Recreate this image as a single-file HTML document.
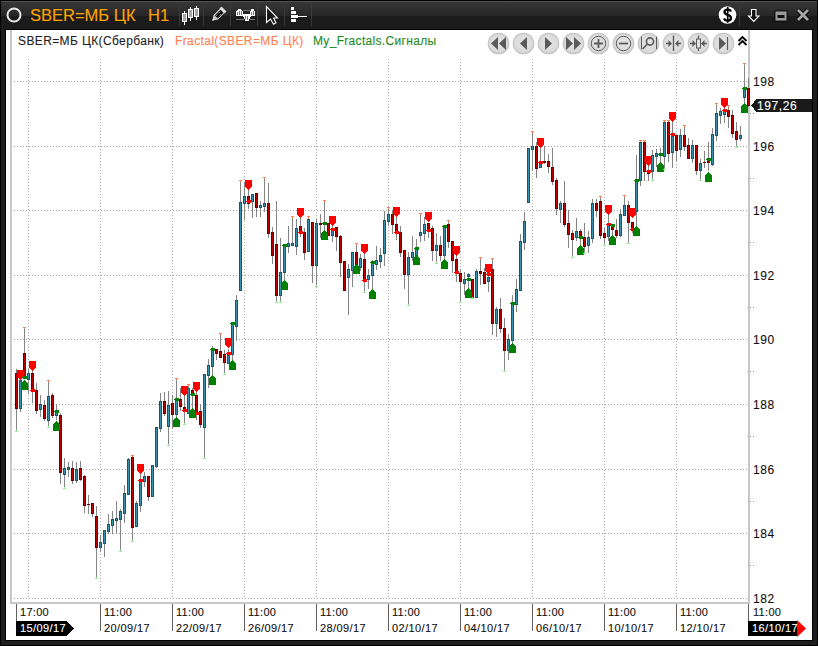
<!DOCTYPE html>
<html><head><meta charset="utf-8">
<style>
html,body{margin:0;padding:0;background:#1e1e1e;}
#root{position:relative;width:818px;height:646px;overflow:hidden;font-family:"Liberation Sans",sans-serif;}
#root svg{position:absolute;left:0;top:0;}
.t{position:absolute;white-space:nowrap;line-height:1;-webkit-text-stroke:0.1px currentColor;}
.tm{letter-spacing:0.35px;}
</style></head><body><div id="root">
<svg width="818" height="646" viewBox="0 0 818 646" shape-rendering="crispEdges"><defs><linearGradient id="hdr" x1="0" y1="0" x2="0" y2="1"><stop offset="0" stop-color="#383838"/><stop offset="1" stop-color="#262626"/></linearGradient><radialGradient id="btn" cx="0.5" cy="0.45" r="0.55"><stop offset="0" stop-color="#e4e4e4"/><stop offset="0.85" stop-color="#dadada"/><stop offset="1" stop-color="#d0d0d0"/></radialGradient></defs><rect x="0" y="0" width="818" height="646" fill="#1e1e1e"/><rect x="0" y="1" width="818" height="15" fill="url(#hdr)"/><rect x="0" y="16" width="818" height="13" fill="#1b1b1b"/><rect x="0" y="1" width="818" height="1" fill="#505050"/><rect x="0" y="0" width="818" height="1" fill="#000"/><rect x="0" y="0" width="1" height="646" fill="#000"/><rect x="817" y="0" width="1" height="646" fill="#000"/><rect x="0" y="645" width="818" height="1" fill="#000"/><rect x="5" y="29" width="808" height="612" fill="#000"/><rect x="6" y="30" width="806" height="610" fill="#fff"/><circle cx="14" cy="15" r="6.5" fill="none" stroke="#e8e8e8" stroke-width="2" shape-rendering="geometricPrecision"/><rect x="179" y="5" width="1" height="21" fill="#3a3a3a"/><rect x="203" y="5" width="1" height="21" fill="#3a3a3a"/><rect x="230" y="5" width="1" height="21" fill="#3a3a3a"/><rect x="257" y="5" width="1" height="21" fill="#3a3a3a"/><rect x="284" y="5" width="1" height="21" fill="#3a3a3a"/><rect x="311" y="5" width="1" height="21" fill="#3a3a3a"/><rect x="739" y="5" width="1" height="21" fill="#3a3a3a"/><rect x="184" y="11" width="1" height="14" fill="#fff"/><rect x="182" y="13" width="5" height="9" fill="#fff"/><rect x="183" y="14" width="3" height="7" fill="#a8a8a8"/><rect x="190" y="7" width="1" height="14" fill="#fff"/><rect x="188" y="9" width="5" height="9" fill="#fff"/><rect x="189" y="10" width="3" height="7" fill="#a8a8a8"/><rect x="196" y="6" width="1" height="14" fill="#fff"/><rect x="194" y="8" width="5" height="9" fill="#fff"/><rect x="195" y="9" width="3" height="7" fill="#a8a8a8"/><g shape-rendering="geometricPrecision"><path d="M212 21 L213 15 L221.5 6.5 L226.5 11.5 L218 20 Z" fill="#c8c8c8" stroke="#000" stroke-width="0.6"/><path d="M214.8 15.6 L220.6 9.8 L223.6 12.8 L217.8 18.6 Z" fill="#000"/><path d="M216 15.8 L220.5 11.3 M217.8 17.5 L222.3 13" stroke="#fff" stroke-width="0.9" stroke-dasharray="1 1"/><path d="M221.5 6.5 L226.5 11.5 L224.5 13.5 L219.5 8.5 Z" fill="#e0e0e0"/><path d="M212.2 20.8 L213 18.5 L214.5 20 Z" fill="#fff"/></g><g shape-rendering="crispEdges"><rect x="236" y="11" width="7" height="5" fill="#fff"/><rect x="237" y="10" width="5" height="1" fill="#fff"/><rect x="238" y="9" width="3" height="1" fill="#fff"/><rect x="237" y="12" width="1" height="3" fill="#777"/><rect x="239" y="11" width="1" height="4" fill="#777"/><rect x="241" y="11" width="1" height="4" fill="#777"/><rect x="243" y="14" width="8" height="3" fill="#fff"/><rect x="244" y="17" width="6" height="2" fill="#fff"/><rect x="245" y="19" width="4" height="2" fill="#fff"/><rect x="245" y="16" width="1" height="3" fill="#777"/><rect x="247" y="16" width="1" height="4" fill="#777"/><rect x="250" y="11" width="5" height="5" fill="#fff"/><rect x="251" y="9" width="3" height="2" fill="#fff"/><rect x="251" y="12" width="1" height="3" fill="#777"/><rect x="253" y="11" width="1" height="4" fill="#777"/><rect x="243" y="10" width="7" height="1" fill="#777"/><rect x="243" y="11" width="7" height="3" fill="#222"/><rect x="236" y="19" width="8" height="1" fill="#777"/><rect x="250" y="19" width="5" height="1" fill="#777"/></g><path d="M266.5 6.5 V22.5 L270.5 19 L273.5 24.3 L276 22.8 L273.5 18 H277.5 Z" fill="#161616" stroke="#fff" stroke-width="1.1" stroke-linejoin="miter" shape-rendering="geometricPrecision"/><rect x="291" y="7" width="3" height="3" fill="#fff"/><rect x="291" y="11" width="5" height="3" fill="#fff"/><rect x="291" y="15" width="7" height="3" fill="#fff"/><rect x="298" y="16" width="9" height="1" fill="#fff"/><rect x="291" y="19" width="5" height="3" fill="#fff"/><g shape-rendering="geometricPrecision"><circle cx="727.5" cy="15" r="8.8" fill="#fff"/><path d="M730.8 11.6 C730.6 10.3 729.4 9.6 727.7 9.6 C725.8 9.6 724.5 10.5 724.5 12 C724.5 13.7 726.2 14.3 727.7 14.8 C729.4 15.3 731 16 731 17.9 C731 19.6 729.5 20.5 727.7 20.5 C725.8 20.5 724.4 19.7 724.2 18.3" fill="none" stroke="#000" stroke-width="2.3"/><path d="M727.7 7 V22.8" stroke="#000" stroke-width="1.7"/><path d="M751.5 9.5 H756 V16 H759 L753.75 21.5 L748.5 16 H751.5 Z" fill="#111" stroke="#fff" stroke-width="1.1"/><rect x="775" y="11" width="12" height="10" fill="#9a9a9a" stroke="#000" stroke-width="0.8"/><rect x="777.5" y="15" width="7" height="3" fill="#111"/><path d="M798 10 L808 20 M808 10 L798 20" stroke="#000" stroke-width="4.6"/><path d="M798 10 L808 20 M808 10 L798 20" stroke="#a8a8a8" stroke-width="2.8"/></g><line x1="11" y1="81.5" x2="748" y2="81.5" stroke="#a0a0a0" stroke-width="1" stroke-dasharray="1 2"/><line x1="11" y1="146.5" x2="748" y2="146.5" stroke="#a0a0a0" stroke-width="1" stroke-dasharray="1 2"/><line x1="11" y1="210.5" x2="748" y2="210.5" stroke="#a0a0a0" stroke-width="1" stroke-dasharray="1 2"/><line x1="11" y1="275.5" x2="748" y2="275.5" stroke="#a0a0a0" stroke-width="1" stroke-dasharray="1 2"/><line x1="11" y1="339.5" x2="748" y2="339.5" stroke="#a0a0a0" stroke-width="1" stroke-dasharray="1 2"/><line x1="11" y1="404.5" x2="748" y2="404.5" stroke="#a0a0a0" stroke-width="1" stroke-dasharray="1 2"/><line x1="11" y1="469.5" x2="748" y2="469.5" stroke="#a0a0a0" stroke-width="1" stroke-dasharray="1 2"/><line x1="11" y1="533.5" x2="748" y2="533.5" stroke="#a0a0a0" stroke-width="1" stroke-dasharray="1 2"/><line x1="11" y1="598.5" x2="748" y2="598.5" stroke="#a0a0a0" stroke-width="1" stroke-dasharray="1 2"/><line x1="28.5" y1="59" x2="28.5" y2="599" stroke="#b0b0b0" stroke-width="1" stroke-dasharray="1 2"/><line x1="100.5" y1="59" x2="100.5" y2="599" stroke="#b0b0b0" stroke-width="1" stroke-dasharray="1 2"/><line x1="172.5" y1="59" x2="172.5" y2="599" stroke="#b0b0b0" stroke-width="1" stroke-dasharray="1 2"/><line x1="244.5" y1="59" x2="244.5" y2="599" stroke="#b0b0b0" stroke-width="1" stroke-dasharray="1 2"/><line x1="316.5" y1="59" x2="316.5" y2="599" stroke="#b0b0b0" stroke-width="1" stroke-dasharray="1 2"/><line x1="388.5" y1="59" x2="388.5" y2="599" stroke="#b0b0b0" stroke-width="1" stroke-dasharray="1 2"/><line x1="460.5" y1="59" x2="460.5" y2="599" stroke="#b0b0b0" stroke-width="1" stroke-dasharray="1 2"/><line x1="532.5" y1="59" x2="532.5" y2="599" stroke="#b0b0b0" stroke-width="1" stroke-dasharray="1 2"/><line x1="604.5" y1="59" x2="604.5" y2="599" stroke="#b0b0b0" stroke-width="1" stroke-dasharray="1 2"/><line x1="676.5" y1="59" x2="676.5" y2="599" stroke="#b0b0b0" stroke-width="1" stroke-dasharray="1 2"/><rect x="10" y="30" width="2" height="574" fill="#c8c8c8"/><rect x="748" y="30" width="2" height="574" fill="#c8c8c8"/><rect x="10" y="602" width="740" height="2" fill="#c8c8c8"/><rect x="750" y="113" width="1" height="1" fill="#909090"/><rect x="753" y="113" width="1" height="1" fill="#909090"/><rect x="750" y="178" width="1" height="1" fill="#909090"/><rect x="753" y="178" width="1" height="1" fill="#909090"/><rect x="750" y="242" width="1" height="1" fill="#909090"/><rect x="753" y="242" width="1" height="1" fill="#909090"/><rect x="750" y="307" width="1" height="1" fill="#909090"/><rect x="753" y="307" width="1" height="1" fill="#909090"/><rect x="750" y="371" width="1" height="1" fill="#909090"/><rect x="753" y="371" width="1" height="1" fill="#909090"/><rect x="750" y="436" width="1" height="1" fill="#909090"/><rect x="753" y="436" width="1" height="1" fill="#909090"/><rect x="750" y="501" width="1" height="1" fill="#909090"/><rect x="753" y="501" width="1" height="1" fill="#909090"/><rect x="750" y="565" width="1" height="1" fill="#909090"/><rect x="753" y="565" width="1" height="1" fill="#909090"/><rect x="16" y="604" width="1" height="17" fill="#606060"/><rect x="100" y="604" width="1" height="27" fill="#606060"/><rect x="172" y="604" width="1" height="27" fill="#606060"/><rect x="244" y="604" width="1" height="27" fill="#606060"/><rect x="316" y="604" width="1" height="27" fill="#606060"/><rect x="388" y="604" width="1" height="27" fill="#606060"/><rect x="460" y="604" width="1" height="27" fill="#606060"/><rect x="532" y="604" width="1" height="27" fill="#606060"/><rect x="604" y="604" width="1" height="27" fill="#606060"/><rect x="676" y="604" width="1" height="27" fill="#606060"/><rect x="748" y="604" width="1" height="17" fill="#606060"/><g shape-rendering="geometricPrecision"><circle cx="498.5" cy="43.5" r="10.2" fill="url(#btn)" stroke="#c6c6c6" stroke-width="1.3"/><circle cx="523.5" cy="43.5" r="10.2" fill="url(#btn)" stroke="#c6c6c6" stroke-width="1.3"/><circle cx="548.5" cy="43.5" r="10.2" fill="url(#btn)" stroke="#c6c6c6" stroke-width="1.3"/><circle cx="573.5" cy="43.5" r="10.2" fill="url(#btn)" stroke="#c6c6c6" stroke-width="1.3"/><circle cx="598.5" cy="43.5" r="10.2" fill="url(#btn)" stroke="#c6c6c6" stroke-width="1.3"/><circle cx="623.5" cy="43.5" r="10.2" fill="url(#btn)" stroke="#c6c6c6" stroke-width="1.3"/><circle cx="648.5" cy="43.5" r="10.2" fill="url(#btn)" stroke="#c6c6c6" stroke-width="1.3"/><circle cx="673.5" cy="43.5" r="10.2" fill="url(#btn)" stroke="#c6c6c6" stroke-width="1.3"/><circle cx="698.5" cy="43.5" r="10.2" fill="url(#btn)" stroke="#c6c6c6" stroke-width="1.3"/><circle cx="723.5" cy="43.5" r="10.2" fill="url(#btn)" stroke="#c6c6c6" stroke-width="1.3"/><path d="M491 43.5 L498 37 V50 Z M499 43.5 L506 37 V50 Z" fill="#5a5a5a"/><path d="M520 43.5 L527 37 V50 Z" fill="#5a5a5a"/><path d="M552 43.5 L545 37 V50 Z" fill="#5a5a5a"/><path d="M566 37 L573 43.5 L566 50 Z M574 37 L581 43.5 L574 50 Z" fill="#5a5a5a"/><circle cx="598.5" cy="43.5" r="7.2" fill="none" stroke="#5a5a5a" stroke-width="1"/><path d="M594 43.5 H603 M598.5 39 V48" stroke="#5a5a5a" stroke-width="1.8"/><circle cx="623.5" cy="43.5" r="7.2" fill="none" stroke="#5a5a5a" stroke-width="1"/><path d="M619 43.5 H628" stroke="#5a5a5a" stroke-width="1.8"/><path d="M641.5 36.5 V49 M656.5 36.5 V49" stroke="#5a5a5a" stroke-width="1"/><circle cx="650" cy="41.5" r="3.6" fill="none" stroke="#5a5a5a" stroke-width="1.6"/><path d="M647.5 44 L642.5 49" stroke="#5a5a5a" stroke-width="1.6"/><path d="M673.5 35.5 V51" stroke="#5a5a5a" stroke-width="1.4"/><path d="M666 43.5 H670 M677 43.5 H681" stroke="#5a5a5a" stroke-width="1.4"/><path d="M672 43.5 L668.5 40 V47 Z M675 43.5 L678.5 40 V47 Z" fill="#5a5a5a"/><path d="M698.5 35.5 V51" stroke="#5a5a5a" stroke-width="1.2"/><rect x="696.5" y="39" width="4" height="9" fill="#e0e0e0" stroke="#5a5a5a" stroke-width="1"/><path d="M690 43.5 H694 M703 43.5 H707" stroke="#5a5a5a" stroke-width="1.4"/><path d="M696 43.5 L692.5 40 V47 Z M701 43.5 L704.5 40 V47 Z" fill="#5a5a5a"/><path d="M719 37 L726 43.5 L719 50 Z" fill="#5a5a5a"/><path d="M727.5 37 V50" stroke="#5a5a5a" stroke-width="1.2"/><path d="M738.5 41 L742.5 37 L746.5 41 M738.5 45 L742.5 41 L746.5 45" fill="none" stroke="#000" stroke-width="1.8"/></g><rect x="16" y="369" width="1" height="63" fill="#858585"/><rect x="15" y="373" width="3" height="36" fill="#6a0000"/><rect x="16" y="374" width="1" height="34" fill="#b80000"/><rect x="20" y="377" width="1" height="35" fill="#858585"/><rect x="19" y="380" width="3" height="29" fill="#1e5568"/><rect x="20" y="381" width="1" height="27" fill="#3a90aa"/><rect x="24" y="327" width="1" height="52" fill="#858585"/><rect x="23" y="353" width="3" height="24" fill="#6a0000"/><rect x="24" y="354" width="1" height="22" fill="#b80000"/><rect x="28" y="369" width="1" height="25" fill="#858585"/><rect x="27" y="373" width="3" height="7" fill="#1e5568"/><rect x="28" y="374" width="1" height="5" fill="#3a90aa"/><rect x="32" y="370" width="1" height="33" fill="#858585"/><rect x="31" y="373" width="3" height="18" fill="#6a0000"/><rect x="32" y="374" width="1" height="16" fill="#b80000"/><rect x="36" y="383" width="1" height="31" fill="#858585"/><rect x="35" y="390" width="3" height="21" fill="#6a0000"/><rect x="36" y="391" width="1" height="19" fill="#b80000"/><rect x="40" y="395" width="1" height="22" fill="#858585"/><rect x="39" y="404" width="3" height="6" fill="#1e5568"/><rect x="40" y="405" width="1" height="4" fill="#3a90aa"/><rect x="44" y="400" width="1" height="21" fill="#858585"/><rect x="43" y="405" width="3" height="14" fill="#6a0000"/><rect x="44" y="406" width="1" height="12" fill="#b80000"/><rect x="48" y="380" width="1" height="48" fill="#858585"/><rect x="47" y="396" width="3" height="25" fill="#1e5568"/><rect x="48" y="397" width="1" height="23" fill="#3a90aa"/><rect x="52" y="393" width="1" height="25" fill="#858585"/><rect x="51" y="395" width="3" height="21" fill="#6a0000"/><rect x="52" y="396" width="1" height="19" fill="#b80000"/><rect x="56" y="404" width="1" height="16" fill="#858585"/><rect x="55" y="411" width="3" height="5" fill="#1e5568"/><rect x="56" y="412" width="1" height="3" fill="#3a90aa"/><rect x="60" y="413" width="1" height="71" fill="#858585"/><rect x="59" y="415" width="3" height="58" fill="#6a0000"/><rect x="60" y="416" width="1" height="56" fill="#b80000"/><rect x="64" y="458" width="1" height="31" fill="#858585"/><rect x="63" y="468" width="3" height="7" fill="#1e5568"/><rect x="64" y="469" width="1" height="5" fill="#3a90aa"/><rect x="68" y="462" width="1" height="15" fill="#858585"/><rect x="67" y="467" width="3" height="3" fill="#1e5568"/><rect x="68" y="468" width="1" height="1" fill="#3a90aa"/><rect x="72" y="461" width="1" height="23" fill="#858585"/><rect x="71" y="468" width="3" height="13" fill="#6a0000"/><rect x="72" y="469" width="1" height="11" fill="#b80000"/><rect x="76" y="462" width="1" height="21" fill="#858585"/><rect x="75" y="469" width="3" height="12" fill="#1e5568"/><rect x="76" y="470" width="1" height="10" fill="#3a90aa"/><rect x="80" y="461" width="1" height="20" fill="#858585"/><rect x="79" y="468" width="3" height="12" fill="#6a0000"/><rect x="80" y="469" width="1" height="10" fill="#b80000"/><rect x="84" y="475" width="1" height="38" fill="#858585"/><rect x="83" y="476" width="3" height="30" fill="#6a0000"/><rect x="84" y="477" width="1" height="28" fill="#b80000"/><rect x="88" y="495" width="1" height="19" fill="#858585"/><rect x="87" y="504" width="3" height="1" fill="#6a0000"/><rect x="92" y="503" width="1" height="14" fill="#858585"/><rect x="91" y="503" width="3" height="11" fill="#6a0000"/><rect x="92" y="504" width="1" height="9" fill="#b80000"/><rect x="96" y="506" width="1" height="73" fill="#858585"/><rect x="95" y="516" width="3" height="32" fill="#6a0000"/><rect x="96" y="517" width="1" height="30" fill="#b80000"/><rect x="100" y="535" width="1" height="17" fill="#858585"/><rect x="99" y="542" width="3" height="6" fill="#1e5568"/><rect x="100" y="543" width="1" height="4" fill="#3a90aa"/><rect x="104" y="530" width="1" height="27" fill="#858585"/><rect x="103" y="530" width="3" height="14" fill="#1e5568"/><rect x="104" y="531" width="1" height="12" fill="#3a90aa"/><rect x="108" y="514" width="1" height="20" fill="#858585"/><rect x="107" y="524" width="3" height="8" fill="#1e5568"/><rect x="108" y="525" width="1" height="6" fill="#3a90aa"/><rect x="112" y="511" width="1" height="23" fill="#858585"/><rect x="111" y="519" width="3" height="7" fill="#1e5568"/><rect x="112" y="520" width="1" height="5" fill="#3a90aa"/><rect x="116" y="501" width="1" height="33" fill="#858585"/><rect x="115" y="518" width="3" height="3" fill="#1e5568"/><rect x="116" y="519" width="1" height="1" fill="#3a90aa"/><rect x="120" y="509" width="1" height="43" fill="#858585"/><rect x="119" y="511" width="3" height="9" fill="#1e5568"/><rect x="120" y="512" width="1" height="7" fill="#3a90aa"/><rect x="124" y="485" width="1" height="38" fill="#858585"/><rect x="123" y="493" width="3" height="21" fill="#1e5568"/><rect x="124" y="494" width="1" height="19" fill="#3a90aa"/><rect x="128" y="458" width="1" height="37" fill="#858585"/><rect x="127" y="459" width="3" height="36" fill="#1e5568"/><rect x="128" y="460" width="1" height="34" fill="#3a90aa"/><rect x="132" y="455" width="1" height="87" fill="#858585"/><rect x="131" y="457" width="3" height="71" fill="#6a0000"/><rect x="132" y="458" width="1" height="69" fill="#b80000"/><rect x="136" y="501" width="1" height="26" fill="#858585"/><rect x="135" y="503" width="3" height="24" fill="#1e5568"/><rect x="136" y="504" width="1" height="22" fill="#3a90aa"/><rect x="140" y="473" width="1" height="39" fill="#858585"/><rect x="139" y="480" width="3" height="26" fill="#1e5568"/><rect x="140" y="481" width="1" height="24" fill="#3a90aa"/><rect x="144" y="472" width="1" height="15" fill="#858585"/><rect x="143" y="476" width="3" height="6" fill="#1e5568"/><rect x="144" y="477" width="1" height="4" fill="#3a90aa"/><rect x="148" y="476" width="1" height="25" fill="#858585"/><rect x="147" y="476" width="3" height="21" fill="#6a0000"/><rect x="148" y="477" width="1" height="19" fill="#b80000"/><rect x="152" y="465" width="1" height="32" fill="#858585"/><rect x="151" y="465" width="3" height="32" fill="#1e5568"/><rect x="152" y="466" width="1" height="30" fill="#3a90aa"/><rect x="156" y="427" width="1" height="41" fill="#858585"/><rect x="155" y="427" width="3" height="40" fill="#1e5568"/><rect x="156" y="428" width="1" height="38" fill="#3a90aa"/><rect x="160" y="393" width="1" height="39" fill="#858585"/><rect x="159" y="401" width="3" height="28" fill="#1e5568"/><rect x="160" y="402" width="1" height="26" fill="#3a90aa"/><rect x="164" y="392" width="1" height="24" fill="#858585"/><rect x="163" y="401" width="3" height="13" fill="#6a0000"/><rect x="164" y="402" width="1" height="11" fill="#b80000"/><rect x="168" y="391" width="1" height="55" fill="#858585"/><rect x="167" y="405" width="3" height="22" fill="#1e5568"/><rect x="168" y="406" width="1" height="20" fill="#3a90aa"/><rect x="172" y="395" width="1" height="34" fill="#858585"/><rect x="171" y="403" width="3" height="12" fill="#6a0000"/><rect x="172" y="404" width="1" height="10" fill="#b80000"/><rect x="176" y="378" width="1" height="39" fill="#858585"/><rect x="175" y="399" width="3" height="16" fill="#1e5568"/><rect x="176" y="400" width="1" height="14" fill="#3a90aa"/><rect x="180" y="388" width="1" height="23" fill="#858585"/><rect x="179" y="399" width="3" height="8" fill="#6a0000"/><rect x="180" y="400" width="1" height="6" fill="#b80000"/><rect x="184" y="391" width="1" height="34" fill="#858585"/><rect x="183" y="407" width="3" height="4" fill="#6a0000"/><rect x="184" y="408" width="1" height="2" fill="#b80000"/><rect x="188" y="384" width="1" height="30" fill="#858585"/><rect x="187" y="388" width="3" height="26" fill="#1e5568"/><rect x="188" y="389" width="1" height="24" fill="#3a90aa"/><rect x="192" y="388" width="1" height="23" fill="#858585"/><rect x="191" y="390" width="3" height="4" fill="#6a0000"/><rect x="192" y="391" width="1" height="2" fill="#b80000"/><rect x="196" y="392" width="1" height="28" fill="#858585"/><rect x="195" y="395" width="3" height="20" fill="#6a0000"/><rect x="196" y="396" width="1" height="18" fill="#b80000"/><rect x="200" y="404" width="1" height="24" fill="#858585"/><rect x="199" y="411" width="3" height="14" fill="#6a0000"/><rect x="200" y="412" width="1" height="12" fill="#b80000"/><rect x="204" y="374" width="1" height="85" fill="#858585"/><rect x="203" y="374" width="3" height="54" fill="#1e5568"/><rect x="204" y="375" width="1" height="52" fill="#3a90aa"/><rect x="208" y="359" width="1" height="29" fill="#858585"/><rect x="207" y="365" width="3" height="11" fill="#1e5568"/><rect x="208" y="366" width="1" height="9" fill="#3a90aa"/><rect x="212" y="346" width="1" height="30" fill="#858585"/><rect x="211" y="348" width="3" height="19" fill="#1e5568"/><rect x="212" y="349" width="1" height="17" fill="#3a90aa"/><rect x="216" y="349" width="1" height="11" fill="#858585"/><rect x="215" y="349" width="3" height="5" fill="#6a0000"/><rect x="216" y="350" width="1" height="3" fill="#b80000"/><rect x="220" y="333" width="1" height="25" fill="#858585"/><rect x="219" y="351" width="3" height="7" fill="#6a0000"/><rect x="220" y="352" width="1" height="5" fill="#b80000"/><rect x="224" y="350" width="1" height="25" fill="#858585"/><rect x="223" y="354" width="3" height="9" fill="#6a0000"/><rect x="224" y="355" width="1" height="7" fill="#b80000"/><rect x="228" y="349" width="1" height="15" fill="#858585"/><rect x="227" y="355" width="3" height="9" fill="#1e5568"/><rect x="228" y="356" width="1" height="7" fill="#3a90aa"/><rect x="232" y="322" width="1" height="40" fill="#858585"/><rect x="231" y="322" width="3" height="33" fill="#1e5568"/><rect x="232" y="323" width="1" height="31" fill="#3a90aa"/><rect x="236" y="295" width="1" height="46" fill="#858585"/><rect x="235" y="300" width="3" height="27" fill="#1e5568"/><rect x="236" y="301" width="1" height="25" fill="#3a90aa"/><rect x="240" y="180" width="1" height="111" fill="#858585"/><rect x="239" y="202" width="3" height="89" fill="#1e5568"/><rect x="240" y="203" width="1" height="87" fill="#3a90aa"/><rect x="244" y="182" width="1" height="38" fill="#858585"/><rect x="243" y="196" width="3" height="8" fill="#1e5568"/><rect x="244" y="197" width="1" height="6" fill="#3a90aa"/><rect x="248" y="189" width="1" height="20" fill="#858585"/><rect x="247" y="196" width="3" height="8" fill="#6a0000"/><rect x="248" y="197" width="1" height="6" fill="#b80000"/><rect x="252" y="194" width="1" height="24" fill="#858585"/><rect x="251" y="194" width="3" height="8" fill="#1e5568"/><rect x="252" y="195" width="1" height="6" fill="#3a90aa"/><rect x="256" y="193" width="1" height="24" fill="#858585"/><rect x="255" y="193" width="3" height="15" fill="#6a0000"/><rect x="256" y="194" width="1" height="13" fill="#b80000"/><rect x="260" y="201" width="1" height="16" fill="#858585"/><rect x="259" y="205" width="3" height="3" fill="#1e5568"/><rect x="260" y="206" width="1" height="1" fill="#3a90aa"/><rect x="264" y="177" width="1" height="35" fill="#858585"/><rect x="263" y="203" width="3" height="4" fill="#1e5568"/><rect x="264" y="204" width="1" height="2" fill="#3a90aa"/><rect x="268" y="183" width="1" height="55" fill="#858585"/><rect x="267" y="203" width="3" height="31" fill="#6a0000"/><rect x="268" y="204" width="1" height="29" fill="#b80000"/><rect x="272" y="227" width="1" height="37" fill="#858585"/><rect x="271" y="232" width="3" height="24" fill="#6a0000"/><rect x="272" y="233" width="1" height="22" fill="#b80000"/><rect x="276" y="201" width="1" height="102" fill="#858585"/><rect x="275" y="244" width="3" height="52" fill="#6a0000"/><rect x="276" y="245" width="1" height="50" fill="#b80000"/><rect x="280" y="238" width="1" height="65" fill="#858585"/><rect x="279" y="272" width="3" height="24" fill="#1e5568"/><rect x="280" y="273" width="1" height="22" fill="#3a90aa"/><rect x="284" y="245" width="1" height="36" fill="#858585"/><rect x="283" y="245" width="3" height="28" fill="#1e5568"/><rect x="284" y="246" width="1" height="26" fill="#3a90aa"/><rect x="288" y="226" width="1" height="27" fill="#858585"/><rect x="287" y="243" width="3" height="4" fill="#1e5568"/><rect x="288" y="244" width="1" height="2" fill="#3a90aa"/><rect x="292" y="216" width="1" height="30" fill="#858585"/><rect x="291" y="243" width="3" height="3" fill="#1e5568"/><rect x="292" y="244" width="1" height="1" fill="#3a90aa"/><rect x="296" y="219" width="1" height="36" fill="#858585"/><rect x="295" y="228" width="3" height="19" fill="#1e5568"/><rect x="296" y="229" width="1" height="17" fill="#3a90aa"/><rect x="300" y="217" width="1" height="20" fill="#858585"/><rect x="299" y="226" width="3" height="7" fill="#6a0000"/><rect x="300" y="227" width="1" height="5" fill="#b80000"/><rect x="304" y="228" width="1" height="32" fill="#858585"/><rect x="303" y="232" width="3" height="21" fill="#6a0000"/><rect x="304" y="233" width="1" height="19" fill="#b80000"/><rect x="308" y="216" width="1" height="36" fill="#858585"/><rect x="307" y="219" width="3" height="33" fill="#1e5568"/><rect x="308" y="220" width="1" height="31" fill="#3a90aa"/><rect x="312" y="222" width="1" height="61" fill="#858585"/><rect x="311" y="222" width="3" height="44" fill="#6a0000"/><rect x="312" y="223" width="1" height="42" fill="#b80000"/><rect x="316" y="219" width="1" height="68" fill="#858585"/><rect x="315" y="223" width="3" height="43" fill="#1e5568"/><rect x="316" y="224" width="1" height="41" fill="#3a90aa"/><rect x="320" y="214" width="1" height="24" fill="#858585"/><rect x="319" y="223" width="3" height="2" fill="#6a0000"/><rect x="324" y="200" width="1" height="31" fill="#858585"/><rect x="323" y="222" width="3" height="3" fill="#1e5568"/><rect x="324" y="223" width="1" height="1" fill="#3a90aa"/><rect x="328" y="223" width="1" height="13" fill="#858585"/><rect x="327" y="223" width="3" height="13" fill="#6a0000"/><rect x="328" y="224" width="1" height="11" fill="#b80000"/><rect x="332" y="225" width="1" height="17" fill="#858585"/><rect x="331" y="230" width="3" height="6" fill="#1e5568"/><rect x="332" y="231" width="1" height="4" fill="#3a90aa"/><rect x="336" y="227" width="1" height="24" fill="#858585"/><rect x="335" y="227" width="3" height="10" fill="#6a0000"/><rect x="336" y="228" width="1" height="8" fill="#b80000"/><rect x="340" y="235" width="1" height="42" fill="#858585"/><rect x="339" y="236" width="3" height="27" fill="#6a0000"/><rect x="340" y="237" width="1" height="25" fill="#b80000"/><rect x="344" y="261" width="1" height="30" fill="#858585"/><rect x="343" y="261" width="3" height="30" fill="#6a0000"/><rect x="344" y="262" width="1" height="28" fill="#b80000"/><rect x="348" y="264" width="1" height="51" fill="#858585"/><rect x="347" y="269" width="3" height="9" fill="#1e5568"/><rect x="348" y="270" width="1" height="7" fill="#3a90aa"/><rect x="352" y="252" width="1" height="35" fill="#858585"/><rect x="351" y="252" width="3" height="19" fill="#1e5568"/><rect x="352" y="253" width="1" height="17" fill="#3a90aa"/><rect x="356" y="243" width="1" height="25" fill="#858585"/><rect x="355" y="252" width="3" height="16" fill="#6a0000"/><rect x="356" y="253" width="1" height="14" fill="#b80000"/><rect x="360" y="254" width="1" height="17" fill="#858585"/><rect x="359" y="258" width="3" height="10" fill="#1e5568"/><rect x="360" y="259" width="1" height="8" fill="#3a90aa"/><rect x="364" y="254" width="1" height="39" fill="#858585"/><rect x="363" y="259" width="3" height="23" fill="#6a0000"/><rect x="364" y="260" width="1" height="21" fill="#b80000"/><rect x="368" y="269" width="1" height="20" fill="#858585"/><rect x="367" y="275" width="3" height="5" fill="#1e5568"/><rect x="368" y="276" width="1" height="3" fill="#3a90aa"/><rect x="372" y="260" width="1" height="30" fill="#858585"/><rect x="371" y="262" width="3" height="14" fill="#1e5568"/><rect x="372" y="263" width="1" height="12" fill="#3a90aa"/><rect x="376" y="246" width="1" height="24" fill="#858585"/><rect x="375" y="260" width="3" height="5" fill="#1e5568"/><rect x="376" y="261" width="1" height="3" fill="#3a90aa"/><rect x="380" y="248" width="1" height="20" fill="#858585"/><rect x="379" y="255" width="3" height="7" fill="#1e5568"/><rect x="380" y="256" width="1" height="5" fill="#3a90aa"/><rect x="384" y="211" width="1" height="55" fill="#858585"/><rect x="383" y="220" width="3" height="34" fill="#1e5568"/><rect x="384" y="221" width="1" height="32" fill="#3a90aa"/><rect x="388" y="207" width="1" height="19" fill="#858585"/><rect x="387" y="214" width="3" height="8" fill="#1e5568"/><rect x="388" y="215" width="1" height="6" fill="#3a90aa"/><rect x="392" y="210" width="1" height="24" fill="#858585"/><rect x="391" y="214" width="3" height="11" fill="#6a0000"/><rect x="392" y="215" width="1" height="9" fill="#b80000"/><rect x="396" y="216" width="1" height="24" fill="#858585"/><rect x="395" y="224" width="3" height="9" fill="#6a0000"/><rect x="396" y="225" width="1" height="7" fill="#b80000"/><rect x="400" y="226" width="1" height="31" fill="#858585"/><rect x="399" y="232" width="3" height="21" fill="#6a0000"/><rect x="400" y="233" width="1" height="19" fill="#b80000"/><rect x="404" y="250" width="1" height="39" fill="#858585"/><rect x="403" y="250" width="3" height="25" fill="#6a0000"/><rect x="404" y="251" width="1" height="23" fill="#b80000"/><rect x="408" y="252" width="1" height="54" fill="#858585"/><rect x="407" y="257" width="3" height="18" fill="#1e5568"/><rect x="408" y="258" width="1" height="16" fill="#3a90aa"/><rect x="412" y="236" width="1" height="25" fill="#858585"/><rect x="411" y="252" width="3" height="6" fill="#1e5568"/><rect x="412" y="253" width="1" height="4" fill="#3a90aa"/><rect x="416" y="239" width="1" height="17" fill="#858585"/><rect x="415" y="248" width="3" height="8" fill="#1e5568"/><rect x="416" y="249" width="1" height="6" fill="#3a90aa"/><rect x="420" y="214" width="1" height="28" fill="#858585"/><rect x="419" y="232" width="3" height="4" fill="#1e5568"/><rect x="420" y="233" width="1" height="2" fill="#3a90aa"/><rect x="424" y="217" width="1" height="24" fill="#858585"/><rect x="423" y="224" width="3" height="10" fill="#1e5568"/><rect x="424" y="225" width="1" height="8" fill="#3a90aa"/><rect x="428" y="223" width="1" height="15" fill="#858585"/><rect x="427" y="223" width="3" height="9" fill="#6a0000"/><rect x="428" y="224" width="1" height="7" fill="#b80000"/><rect x="432" y="226" width="1" height="35" fill="#858585"/><rect x="431" y="228" width="3" height="23" fill="#6a0000"/><rect x="432" y="229" width="1" height="21" fill="#b80000"/><rect x="436" y="233" width="1" height="31" fill="#858585"/><rect x="435" y="245" width="3" height="6" fill="#1e5568"/><rect x="436" y="246" width="1" height="4" fill="#3a90aa"/><rect x="440" y="236" width="1" height="25" fill="#858585"/><rect x="439" y="245" width="3" height="11" fill="#6a0000"/><rect x="440" y="246" width="1" height="9" fill="#b80000"/><rect x="444" y="226" width="1" height="34" fill="#858585"/><rect x="443" y="226" width="3" height="30" fill="#1e5568"/><rect x="444" y="227" width="1" height="28" fill="#3a90aa"/><rect x="448" y="220" width="1" height="28" fill="#858585"/><rect x="447" y="224" width="3" height="18" fill="#6a0000"/><rect x="448" y="225" width="1" height="16" fill="#b80000"/><rect x="452" y="241" width="1" height="32" fill="#858585"/><rect x="451" y="241" width="3" height="20" fill="#6a0000"/><rect x="452" y="242" width="1" height="18" fill="#b80000"/><rect x="456" y="255" width="1" height="27" fill="#858585"/><rect x="455" y="259" width="3" height="15" fill="#6a0000"/><rect x="456" y="260" width="1" height="13" fill="#b80000"/><rect x="460" y="269" width="1" height="34" fill="#858585"/><rect x="459" y="273" width="3" height="9" fill="#6a0000"/><rect x="460" y="274" width="1" height="7" fill="#b80000"/><rect x="464" y="272" width="1" height="23" fill="#858585"/><rect x="463" y="279" width="3" height="5" fill="#1e5568"/><rect x="464" y="280" width="1" height="3" fill="#3a90aa"/><rect x="468" y="273" width="1" height="16" fill="#858585"/><rect x="467" y="274" width="3" height="3" fill="#1e5568"/><rect x="468" y="275" width="1" height="1" fill="#3a90aa"/><rect x="472" y="279" width="1" height="20" fill="#858585"/><rect x="471" y="279" width="3" height="19" fill="#6a0000"/><rect x="472" y="280" width="1" height="17" fill="#b80000"/><rect x="476" y="269" width="1" height="29" fill="#858585"/><rect x="475" y="271" width="3" height="27" fill="#1e5568"/><rect x="476" y="272" width="1" height="25" fill="#3a90aa"/><rect x="480" y="258" width="1" height="27" fill="#858585"/><rect x="479" y="271" width="3" height="3" fill="#6a0000"/><rect x="480" y="272" width="1" height="1" fill="#b80000"/><rect x="484" y="268" width="1" height="16" fill="#858585"/><rect x="483" y="272" width="3" height="12" fill="#6a0000"/><rect x="484" y="273" width="1" height="10" fill="#b80000"/><rect x="488" y="269" width="1" height="23" fill="#858585"/><rect x="487" y="277" width="3" height="5" fill="#1e5568"/><rect x="488" y="278" width="1" height="3" fill="#3a90aa"/><rect x="492" y="258" width="1" height="77" fill="#858585"/><rect x="491" y="269" width="3" height="55" fill="#6a0000"/><rect x="492" y="270" width="1" height="53" fill="#b80000"/><rect x="496" y="307" width="1" height="30" fill="#858585"/><rect x="495" y="309" width="3" height="15" fill="#1e5568"/><rect x="496" y="310" width="1" height="13" fill="#3a90aa"/><rect x="500" y="298" width="1" height="35" fill="#858585"/><rect x="499" y="309" width="3" height="20" fill="#6a0000"/><rect x="500" y="310" width="1" height="18" fill="#b80000"/><rect x="504" y="318" width="1" height="54" fill="#858585"/><rect x="503" y="328" width="3" height="23" fill="#6a0000"/><rect x="504" y="329" width="1" height="21" fill="#b80000"/><rect x="508" y="334" width="1" height="26" fill="#858585"/><rect x="507" y="339" width="3" height="12" fill="#1e5568"/><rect x="508" y="340" width="1" height="10" fill="#3a90aa"/><rect x="512" y="295" width="1" height="49" fill="#858585"/><rect x="511" y="303" width="3" height="38" fill="#1e5568"/><rect x="512" y="304" width="1" height="36" fill="#3a90aa"/><rect x="516" y="279" width="1" height="33" fill="#858585"/><rect x="515" y="289" width="3" height="16" fill="#1e5568"/><rect x="516" y="290" width="1" height="14" fill="#3a90aa"/><rect x="520" y="234" width="1" height="57" fill="#858585"/><rect x="519" y="241" width="3" height="50" fill="#1e5568"/><rect x="520" y="242" width="1" height="48" fill="#3a90aa"/><rect x="524" y="212" width="1" height="38" fill="#858585"/><rect x="523" y="221" width="3" height="22" fill="#1e5568"/><rect x="524" y="222" width="1" height="20" fill="#3a90aa"/><rect x="528" y="148" width="1" height="55" fill="#858585"/><rect x="527" y="148" width="3" height="55" fill="#1e5568"/><rect x="528" y="149" width="1" height="53" fill="#3a90aa"/><rect x="532" y="131" width="1" height="40" fill="#858585"/><rect x="531" y="146" width="3" height="4" fill="#1e5568"/><rect x="532" y="147" width="1" height="2" fill="#3a90aa"/><rect x="536" y="142" width="1" height="36" fill="#858585"/><rect x="535" y="146" width="3" height="23" fill="#6a0000"/><rect x="536" y="147" width="1" height="21" fill="#b80000"/><rect x="540" y="146" width="1" height="22" fill="#858585"/><rect x="539" y="164" width="3" height="4" fill="#1e5568"/><rect x="540" y="165" width="1" height="2" fill="#3a90aa"/><rect x="544" y="146" width="1" height="18" fill="#858585"/><rect x="543" y="161" width="3" height="2" fill="#6a0000"/><rect x="548" y="154" width="1" height="19" fill="#858585"/><rect x="547" y="161" width="3" height="6" fill="#6a0000"/><rect x="548" y="162" width="1" height="4" fill="#b80000"/><rect x="552" y="148" width="1" height="37" fill="#858585"/><rect x="551" y="167" width="3" height="15" fill="#6a0000"/><rect x="552" y="168" width="1" height="13" fill="#b80000"/><rect x="556" y="178" width="1" height="37" fill="#858585"/><rect x="555" y="180" width="3" height="29" fill="#6a0000"/><rect x="556" y="181" width="1" height="27" fill="#b80000"/><rect x="560" y="201" width="1" height="22" fill="#858585"/><rect x="559" y="203" width="3" height="7" fill="#1e5568"/><rect x="560" y="204" width="1" height="5" fill="#3a90aa"/><rect x="564" y="181" width="1" height="46" fill="#858585"/><rect x="563" y="203" width="3" height="22" fill="#6a0000"/><rect x="564" y="204" width="1" height="20" fill="#b80000"/><rect x="568" y="210" width="1" height="38" fill="#858585"/><rect x="567" y="223" width="3" height="12" fill="#6a0000"/><rect x="568" y="224" width="1" height="10" fill="#b80000"/><rect x="572" y="230" width="1" height="28" fill="#858585"/><rect x="571" y="233" width="3" height="7" fill="#6a0000"/><rect x="572" y="234" width="1" height="5" fill="#b80000"/><rect x="576" y="218" width="1" height="23" fill="#858585"/><rect x="575" y="231" width="3" height="7" fill="#1e5568"/><rect x="576" y="232" width="1" height="5" fill="#3a90aa"/><rect x="580" y="229" width="1" height="17" fill="#858585"/><rect x="579" y="231" width="3" height="6" fill="#6a0000"/><rect x="580" y="232" width="1" height="4" fill="#b80000"/><rect x="584" y="223" width="1" height="31" fill="#858585"/><rect x="583" y="237" width="3" height="10" fill="#6a0000"/><rect x="584" y="238" width="1" height="8" fill="#b80000"/><rect x="588" y="231" width="1" height="22" fill="#858585"/><rect x="587" y="237" width="3" height="9" fill="#1e5568"/><rect x="588" y="238" width="1" height="7" fill="#3a90aa"/><rect x="592" y="199" width="1" height="44" fill="#858585"/><rect x="591" y="203" width="3" height="36" fill="#1e5568"/><rect x="592" y="204" width="1" height="34" fill="#3a90aa"/><rect x="596" y="199" width="1" height="18" fill="#858585"/><rect x="595" y="203" width="3" height="8" fill="#6a0000"/><rect x="596" y="204" width="1" height="6" fill="#b80000"/><rect x="600" y="196" width="1" height="43" fill="#858585"/><rect x="599" y="201" width="3" height="35" fill="#6a0000"/><rect x="600" y="202" width="1" height="33" fill="#b80000"/><rect x="604" y="228" width="1" height="18" fill="#858585"/><rect x="603" y="233" width="3" height="5" fill="#6a0000"/><rect x="604" y="234" width="1" height="3" fill="#b80000"/><rect x="608" y="215" width="1" height="26" fill="#858585"/><rect x="607" y="225" width="3" height="12" fill="#1e5568"/><rect x="608" y="226" width="1" height="10" fill="#3a90aa"/><rect x="612" y="224" width="1" height="12" fill="#858585"/><rect x="611" y="224" width="3" height="6" fill="#6a0000"/><rect x="612" y="225" width="1" height="4" fill="#b80000"/><rect x="616" y="219" width="1" height="19" fill="#858585"/><rect x="615" y="230" width="3" height="6" fill="#6a0000"/><rect x="616" y="231" width="1" height="4" fill="#b80000"/><rect x="620" y="209" width="1" height="28" fill="#858585"/><rect x="619" y="214" width="3" height="22" fill="#1e5568"/><rect x="620" y="215" width="1" height="20" fill="#3a90aa"/><rect x="624" y="195" width="1" height="21" fill="#858585"/><rect x="623" y="205" width="3" height="11" fill="#1e5568"/><rect x="624" y="206" width="1" height="9" fill="#3a90aa"/><rect x="628" y="201" width="1" height="43" fill="#858585"/><rect x="627" y="205" width="3" height="18" fill="#6a0000"/><rect x="628" y="206" width="1" height="16" fill="#b80000"/><rect x="632" y="222" width="1" height="11" fill="#858585"/><rect x="631" y="222" width="3" height="8" fill="#6a0000"/><rect x="632" y="223" width="1" height="6" fill="#b80000"/><rect x="636" y="155" width="1" height="76" fill="#858585"/><rect x="635" y="180" width="3" height="32" fill="#1e5568"/><rect x="636" y="181" width="1" height="30" fill="#3a90aa"/><rect x="640" y="140" width="1" height="46" fill="#858585"/><rect x="639" y="142" width="3" height="39" fill="#1e5568"/><rect x="640" y="143" width="1" height="37" fill="#3a90aa"/><rect x="644" y="141" width="1" height="40" fill="#858585"/><rect x="643" y="142" width="3" height="30" fill="#6a0000"/><rect x="644" y="143" width="1" height="28" fill="#b80000"/><rect x="648" y="166" width="1" height="15" fill="#858585"/><rect x="647" y="170" width="3" height="4" fill="#6a0000"/><rect x="648" y="171" width="1" height="2" fill="#b80000"/><rect x="652" y="150" width="1" height="31" fill="#858585"/><rect x="651" y="155" width="3" height="17" fill="#1e5568"/><rect x="652" y="156" width="1" height="15" fill="#3a90aa"/><rect x="656" y="149" width="1" height="18" fill="#858585"/><rect x="655" y="153" width="3" height="4" fill="#1e5568"/><rect x="656" y="154" width="1" height="2" fill="#3a90aa"/><rect x="660" y="148" width="1" height="15" fill="#858585"/><rect x="659" y="153" width="3" height="2" fill="#6a0000"/><rect x="664" y="120" width="1" height="50" fill="#858585"/><rect x="663" y="122" width="3" height="35" fill="#1e5568"/><rect x="664" y="123" width="1" height="33" fill="#3a90aa"/><rect x="668" y="120" width="1" height="42" fill="#858585"/><rect x="667" y="122" width="3" height="32" fill="#6a0000"/><rect x="668" y="123" width="1" height="30" fill="#b80000"/><rect x="672" y="122" width="1" height="46" fill="#858585"/><rect x="671" y="136" width="3" height="17" fill="#1e5568"/><rect x="672" y="137" width="1" height="15" fill="#3a90aa"/><rect x="676" y="135" width="1" height="26" fill="#858585"/><rect x="675" y="135" width="3" height="16" fill="#6a0000"/><rect x="676" y="136" width="1" height="14" fill="#b80000"/><rect x="680" y="129" width="1" height="28" fill="#858585"/><rect x="679" y="135" width="3" height="15" fill="#1e5568"/><rect x="680" y="136" width="1" height="13" fill="#3a90aa"/><rect x="684" y="125" width="1" height="26" fill="#858585"/><rect x="683" y="135" width="3" height="12" fill="#6a0000"/><rect x="684" y="136" width="1" height="10" fill="#b80000"/><rect x="688" y="138" width="1" height="21" fill="#858585"/><rect x="687" y="145" width="3" height="14" fill="#6a0000"/><rect x="688" y="146" width="1" height="12" fill="#b80000"/><rect x="692" y="140" width="1" height="23" fill="#858585"/><rect x="691" y="145" width="3" height="14" fill="#1e5568"/><rect x="692" y="146" width="1" height="12" fill="#3a90aa"/><rect x="696" y="145" width="1" height="30" fill="#858585"/><rect x="695" y="145" width="3" height="26" fill="#6a0000"/><rect x="696" y="146" width="1" height="24" fill="#b80000"/><rect x="700" y="159" width="1" height="22" fill="#858585"/><rect x="699" y="163" width="3" height="8" fill="#1e5568"/><rect x="700" y="164" width="1" height="6" fill="#3a90aa"/><rect x="704" y="151" width="1" height="17" fill="#858585"/><rect x="703" y="162" width="3" height="1" fill="#6a0000"/><rect x="708" y="142" width="1" height="29" fill="#858585"/><rect x="707" y="158" width="3" height="5" fill="#6a0000"/><rect x="708" y="159" width="1" height="3" fill="#b80000"/><rect x="712" y="128" width="1" height="38" fill="#858585"/><rect x="711" y="134" width="3" height="31" fill="#1e5568"/><rect x="712" y="135" width="1" height="29" fill="#3a90aa"/><rect x="716" y="103" width="1" height="38" fill="#858585"/><rect x="715" y="113" width="3" height="23" fill="#1e5568"/><rect x="716" y="114" width="1" height="21" fill="#3a90aa"/><rect x="720" y="108" width="1" height="16" fill="#858585"/><rect x="719" y="111" width="3" height="5" fill="#1e5568"/><rect x="720" y="112" width="1" height="3" fill="#3a90aa"/><rect x="724" y="106" width="1" height="17" fill="#858585"/><rect x="723" y="111" width="3" height="4" fill="#1e5568"/><rect x="724" y="112" width="1" height="2" fill="#3a90aa"/><rect x="728" y="106" width="1" height="22" fill="#858585"/><rect x="727" y="110" width="3" height="7" fill="#6a0000"/><rect x="728" y="111" width="1" height="5" fill="#b80000"/><rect x="732" y="110" width="1" height="28" fill="#858585"/><rect x="731" y="115" width="3" height="19" fill="#6a0000"/><rect x="732" y="116" width="1" height="17" fill="#b80000"/><rect x="736" y="122" width="1" height="26" fill="#858585"/><rect x="735" y="131" width="3" height="9" fill="#6a0000"/><rect x="736" y="132" width="1" height="7" fill="#b80000"/><rect x="740" y="126" width="1" height="15" fill="#858585"/><rect x="739" y="135" width="3" height="4" fill="#1e5568"/><rect x="740" y="136" width="1" height="2" fill="#3a90aa"/><rect x="744" y="64" width="1" height="42" fill="#858585"/><rect x="743" y="88" width="3" height="10" fill="#1e5568"/><rect x="744" y="89" width="1" height="8" fill="#3a90aa"/><rect x="748" y="78" width="1" height="29" fill="#858585"/><rect x="747" y="88" width="3" height="18" fill="#6a0000"/><rect x="748" y="89" width="1" height="16" fill="#b80000"/><path d="M17 370h7v6l-3.5 4l-3.5 -4z" fill="#ff0000"/><path d="M29 361h7v6l-3.5 4l-3.5 -4z" fill="#ff0000"/><path d="M137 464h7v6l-3.5 4l-3.5 -4z" fill="#ff0000"/><path d="M181 386h7v6l-3.5 4l-3.5 -4z" fill="#ff0000"/><path d="M193 382h7v6l-3.5 4l-3.5 -4z" fill="#ff0000"/><path d="M225 338h7v6l-3.5 4l-3.5 -4z" fill="#ff0000"/><path d="M245 180h7v6l-3.5 4l-3.5 -4z" fill="#ff0000"/><path d="M297 208h7v6l-3.5 4l-3.5 -4z" fill="#ff0000"/><path d="M329 216h7v6l-3.5 4l-3.5 -4z" fill="#ff0000"/><path d="M361 244h7v6l-3.5 4l-3.5 -4z" fill="#ff0000"/><path d="M393 207h7v6l-3.5 4l-3.5 -4z" fill="#ff0000"/><path d="M425 212h7v6l-3.5 4l-3.5 -4z" fill="#ff0000"/><path d="M453 246h7v6l-3.5 4l-3.5 -4z" fill="#ff0000"/><path d="M485 264h7v6l-3.5 4l-3.5 -4z" fill="#ff0000"/><path d="M537 138h7v6l-3.5 4l-3.5 -4z" fill="#ff0000"/><path d="M605 205h7v6l-3.5 4l-3.5 -4z" fill="#ff0000"/><path d="M629 208h7v6l-3.5 4l-3.5 -4z" fill="#ff0000"/><path d="M645 156h7v6l-3.5 4l-3.5 -4z" fill="#ff0000"/><path d="M669 112h7v6l-3.5 4l-3.5 -4z" fill="#ff0000"/><path d="M721 98h7v6l-3.5 4l-3.5 -4z" fill="#ff0000"/><rect x="31" y="389" width="4" height="3" fill="#ff0000"/><rect x="30" y="390" width="1" height="1" fill="#ff0000"/><rect x="139" y="479" width="4" height="3" fill="#ff0000"/><rect x="138" y="480" width="1" height="1" fill="#ff0000"/><rect x="183" y="409" width="4" height="3" fill="#ff0000"/><rect x="182" y="410" width="1" height="1" fill="#ff0000"/><rect x="195" y="412" width="4" height="3" fill="#ff0000"/><rect x="194" y="413" width="1" height="1" fill="#ff0000"/><rect x="227" y="352" width="4" height="3" fill="#ff0000"/><rect x="226" y="353" width="1" height="1" fill="#ff0000"/><rect x="247" y="200" width="4" height="3" fill="#ff0000"/><rect x="246" y="201" width="1" height="1" fill="#ff0000"/><rect x="299" y="231" width="4" height="3" fill="#ff0000"/><rect x="298" y="232" width="1" height="1" fill="#ff0000"/><rect x="331" y="228" width="4" height="3" fill="#ff0000"/><rect x="330" y="229" width="1" height="1" fill="#ff0000"/><rect x="363" y="279" width="4" height="3" fill="#ff0000"/><rect x="362" y="280" width="1" height="1" fill="#ff0000"/><rect x="395" y="231" width="4" height="3" fill="#ff0000"/><rect x="394" y="232" width="1" height="1" fill="#ff0000"/><rect x="427" y="229" width="4" height="3" fill="#ff0000"/><rect x="426" y="230" width="1" height="1" fill="#ff0000"/><rect x="455" y="271" width="4" height="3" fill="#ff0000"/><rect x="454" y="272" width="1" height="1" fill="#ff0000"/><rect x="487" y="273" width="4" height="3" fill="#ff0000"/><rect x="486" y="274" width="1" height="1" fill="#ff0000"/><rect x="539" y="161" width="4" height="3" fill="#ff0000"/><rect x="538" y="162" width="1" height="1" fill="#ff0000"/><rect x="607" y="223" width="4" height="3" fill="#ff0000"/><rect x="606" y="224" width="1" height="1" fill="#ff0000"/><rect x="631" y="228" width="4" height="3" fill="#ff0000"/><rect x="630" y="229" width="1" height="1" fill="#ff0000"/><rect x="647" y="170" width="4" height="3" fill="#ff0000"/><rect x="646" y="171" width="1" height="1" fill="#ff0000"/><rect x="671" y="133" width="4" height="3" fill="#ff0000"/><rect x="670" y="134" width="1" height="1" fill="#ff0000"/><rect x="723" y="109" width="4" height="3" fill="#ff0000"/><rect x="722" y="110" width="1" height="1" fill="#ff0000"/><path d="M24.5 380l3.5 4v6h-7v-6z" fill="#008000"/><path d="M56.5 421l3.5 4v6h-7v-6z" fill="#008000"/><path d="M176.5 417l3.5 4v6h-7v-6z" fill="#008000"/><path d="M192.5 408l3.5 4v6h-7v-6z" fill="#008000"/><path d="M212.5 375l3.5 4v6h-7v-6z" fill="#008000"/><path d="M232.5 360l3.5 4v6h-7v-6z" fill="#008000"/><path d="M284.5 280l3.5 4v6h-7v-6z" fill="#008000"/><path d="M324.5 230l3.5 4v6h-7v-6z" fill="#008000"/><path d="M356.5 264l3.5 4v6h-7v-6z" fill="#008000"/><path d="M372.5 289l3.5 4v6h-7v-6z" fill="#008000"/><path d="M416.5 255l3.5 4v6h-7v-6z" fill="#008000"/><path d="M444.5 259l3.5 4v6h-7v-6z" fill="#008000"/><path d="M468.5 288l3.5 4v6h-7v-6z" fill="#008000"/><path d="M512.5 343l3.5 4v6h-7v-6z" fill="#008000"/><path d="M580.5 245l3.5 4v6h-7v-6z" fill="#008000"/><path d="M612.5 235l3.5 4v6h-7v-6z" fill="#008000"/><path d="M636.5 226l3.5 4v6h-7v-6z" fill="#008000"/><path d="M660.5 162l3.5 4v6h-7v-6z" fill="#008000"/><path d="M708.5 172l3.5 4v6h-7v-6z" fill="#008000"/><path d="M744.5 103l3.5 4v6h-7v-6z" fill="#008000"/><rect x="23" y="376" width="4" height="3" fill="#008000"/><rect x="22" y="377" width="1" height="1" fill="#008000"/><rect x="55" y="410" width="4" height="3" fill="#008000"/><rect x="54" y="411" width="1" height="1" fill="#008000"/><rect x="175" y="398" width="4" height="3" fill="#008000"/><rect x="174" y="399" width="1" height="1" fill="#008000"/><rect x="191" y="393" width="4" height="3" fill="#008000"/><rect x="190" y="394" width="1" height="1" fill="#008000"/><rect x="211" y="348" width="4" height="3" fill="#008000"/><rect x="210" y="349" width="1" height="1" fill="#008000"/><rect x="231" y="322" width="4" height="3" fill="#008000"/><rect x="230" y="323" width="1" height="1" fill="#008000"/><rect x="283" y="244" width="4" height="3" fill="#008000"/><rect x="282" y="245" width="1" height="1" fill="#008000"/><rect x="323" y="222" width="4" height="3" fill="#008000"/><rect x="322" y="223" width="1" height="1" fill="#008000"/><rect x="371" y="261" width="4" height="3" fill="#008000"/><rect x="370" y="262" width="1" height="1" fill="#008000"/><rect x="415" y="247" width="4" height="3" fill="#008000"/><rect x="414" y="248" width="1" height="1" fill="#008000"/><rect x="443" y="225" width="4" height="3" fill="#008000"/><rect x="442" y="226" width="1" height="1" fill="#008000"/><rect x="467" y="278" width="4" height="3" fill="#008000"/><rect x="466" y="279" width="1" height="1" fill="#008000"/><rect x="511" y="302" width="4" height="3" fill="#008000"/><rect x="510" y="303" width="1" height="1" fill="#008000"/><rect x="579" y="236" width="4" height="3" fill="#008000"/><rect x="578" y="237" width="1" height="1" fill="#008000"/><rect x="611" y="224" width="4" height="3" fill="#008000"/><rect x="610" y="225" width="1" height="1" fill="#008000"/><rect x="635" y="179" width="4" height="3" fill="#008000"/><rect x="634" y="180" width="1" height="1" fill="#008000"/><rect x="659" y="153" width="4" height="3" fill="#008000"/><rect x="658" y="154" width="1" height="1" fill="#008000"/><rect x="707" y="158" width="4" height="3" fill="#008000"/><rect x="706" y="159" width="1" height="1" fill="#008000"/><rect x="743" y="87" width="4" height="3" fill="#008000"/><rect x="742" y="88" width="1" height="1" fill="#008000"/><rect x="16" y="430" width="1" height="1" fill="#90ee90"/><rect x="15" y="431" width="3" height="1" fill="#90ee90"/><rect x="48" y="426" width="1" height="1" fill="#90ee90"/><rect x="47" y="427" width="3" height="1" fill="#90ee90"/><rect x="64" y="487" width="1" height="1" fill="#90ee90"/><rect x="63" y="488" width="3" height="1" fill="#90ee90"/><rect x="96" y="577" width="1" height="1" fill="#90ee90"/><rect x="95" y="578" width="3" height="1" fill="#90ee90"/><rect x="120" y="550" width="1" height="1" fill="#90ee90"/><rect x="119" y="551" width="3" height="1" fill="#90ee90"/><rect x="132" y="540" width="1" height="1" fill="#90ee90"/><rect x="131" y="541" width="3" height="1" fill="#90ee90"/><rect x="168" y="444" width="1" height="1" fill="#90ee90"/><rect x="167" y="445" width="3" height="1" fill="#90ee90"/><rect x="184" y="423" width="1" height="1" fill="#90ee90"/><rect x="183" y="424" width="3" height="1" fill="#90ee90"/><rect x="204" y="457" width="1" height="1" fill="#90ee90"/><rect x="203" y="458" width="3" height="1" fill="#90ee90"/><rect x="224" y="373" width="1" height="1" fill="#90ee90"/><rect x="223" y="374" width="3" height="1" fill="#90ee90"/><rect x="276" y="301" width="1" height="1" fill="#90ee90"/><rect x="275" y="302" width="3" height="1" fill="#90ee90"/><rect x="280" y="301" width="1" height="1" fill="#90ee90"/><rect x="279" y="302" width="3" height="1" fill="#90ee90"/><rect x="316" y="285" width="1" height="1" fill="#90ee90"/><rect x="315" y="286" width="3" height="1" fill="#90ee90"/><rect x="364" y="291" width="1" height="1" fill="#90ee90"/><rect x="363" y="292" width="3" height="1" fill="#90ee90"/><rect x="408" y="304" width="1" height="1" fill="#90ee90"/><rect x="407" y="305" width="3" height="1" fill="#90ee90"/><rect x="436" y="262" width="1" height="1" fill="#90ee90"/><rect x="435" y="263" width="3" height="1" fill="#90ee90"/><rect x="460" y="301" width="1" height="1" fill="#90ee90"/><rect x="459" y="302" width="3" height="1" fill="#90ee90"/><rect x="472" y="297" width="1" height="1" fill="#90ee90"/><rect x="471" y="298" width="3" height="1" fill="#90ee90"/><rect x="504" y="370" width="1" height="1" fill="#90ee90"/><rect x="503" y="371" width="3" height="1" fill="#90ee90"/><rect x="572" y="256" width="1" height="1" fill="#90ee90"/><rect x="571" y="257" width="3" height="1" fill="#90ee90"/><rect x="584" y="252" width="1" height="1" fill="#90ee90"/><rect x="583" y="253" width="3" height="1" fill="#90ee90"/><rect x="604" y="244" width="1" height="1" fill="#90ee90"/><rect x="603" y="245" width="3" height="1" fill="#90ee90"/><rect x="628" y="242" width="1" height="1" fill="#90ee90"/><rect x="627" y="243" width="3" height="1" fill="#90ee90"/><rect x="652" y="179" width="1" height="1" fill="#90ee90"/><rect x="651" y="180" width="3" height="1" fill="#90ee90"/><rect x="664" y="168" width="1" height="1" fill="#90ee90"/><rect x="663" y="169" width="3" height="1" fill="#90ee90"/><rect x="700" y="179" width="1" height="1" fill="#90ee90"/><rect x="699" y="180" width="3" height="1" fill="#90ee90"/><rect x="736" y="146" width="1" height="1" fill="#90ee90"/><rect x="735" y="147" width="3" height="1" fill="#90ee90"/><rect x="23" y="327" width="3" height="1" fill="#ff7f50"/><rect x="24" y="328" width="1" height="1" fill="#ff7f50"/><rect x="47" y="380" width="3" height="1" fill="#ff7f50"/><rect x="48" y="381" width="1" height="1" fill="#ff7f50"/><rect x="131" y="455" width="3" height="1" fill="#ff7f50"/><rect x="132" y="456" width="1" height="1" fill="#ff7f50"/><rect x="175" y="378" width="3" height="1" fill="#ff7f50"/><rect x="176" y="379" width="1" height="1" fill="#ff7f50"/><rect x="187" y="384" width="3" height="1" fill="#ff7f50"/><rect x="188" y="385" width="1" height="1" fill="#ff7f50"/><rect x="219" y="333" width="3" height="1" fill="#ff7f50"/><rect x="220" y="334" width="1" height="1" fill="#ff7f50"/><rect x="239" y="180" width="3" height="1" fill="#ff7f50"/><rect x="240" y="181" width="1" height="1" fill="#ff7f50"/><rect x="263" y="177" width="3" height="1" fill="#ff7f50"/><rect x="264" y="178" width="1" height="1" fill="#ff7f50"/><rect x="291" y="216" width="3" height="1" fill="#ff7f50"/><rect x="292" y="217" width="1" height="1" fill="#ff7f50"/><rect x="307" y="216" width="3" height="1" fill="#ff7f50"/><rect x="308" y="217" width="1" height="1" fill="#ff7f50"/><rect x="323" y="200" width="3" height="1" fill="#ff7f50"/><rect x="324" y="201" width="1" height="1" fill="#ff7f50"/><rect x="355" y="243" width="3" height="1" fill="#ff7f50"/><rect x="356" y="244" width="1" height="1" fill="#ff7f50"/><rect x="387" y="207" width="3" height="1" fill="#ff7f50"/><rect x="388" y="208" width="1" height="1" fill="#ff7f50"/><rect x="419" y="213" width="3" height="1" fill="#ff7f50"/><rect x="420" y="214" width="1" height="1" fill="#ff7f50"/><rect x="447" y="220" width="3" height="1" fill="#ff7f50"/><rect x="448" y="221" width="1" height="1" fill="#ff7f50"/><rect x="479" y="257" width="3" height="1" fill="#ff7f50"/><rect x="480" y="258" width="1" height="1" fill="#ff7f50"/><rect x="491" y="258" width="3" height="1" fill="#ff7f50"/><rect x="492" y="259" width="1" height="1" fill="#ff7f50"/><rect x="531" y="131" width="3" height="1" fill="#ff7f50"/><rect x="532" y="132" width="1" height="1" fill="#ff7f50"/><rect x="599" y="196" width="3" height="1" fill="#ff7f50"/><rect x="600" y="197" width="1" height="1" fill="#ff7f50"/><rect x="623" y="195" width="3" height="1" fill="#ff7f50"/><rect x="624" y="196" width="1" height="1" fill="#ff7f50"/><rect x="639" y="140" width="3" height="1" fill="#ff7f50"/><rect x="640" y="141" width="1" height="1" fill="#ff7f50"/><rect x="643" y="140" width="3" height="1" fill="#ff7f50"/><rect x="644" y="141" width="1" height="1" fill="#ff7f50"/><rect x="663" y="120" width="3" height="1" fill="#ff7f50"/><rect x="664" y="121" width="1" height="1" fill="#ff7f50"/><rect x="667" y="120" width="3" height="1" fill="#ff7f50"/><rect x="668" y="121" width="1" height="1" fill="#ff7f50"/><rect x="683" y="125" width="3" height="1" fill="#ff7f50"/><rect x="684" y="126" width="1" height="1" fill="#ff7f50"/><rect x="715" y="103" width="3" height="1" fill="#ff7f50"/><rect x="716" y="104" width="1" height="1" fill="#ff7f50"/><rect x="727" y="105" width="3" height="1" fill="#ff7f50"/><rect x="728" y="106" width="1" height="1" fill="#ff7f50"/><rect x="743" y="63" width="3" height="1" fill="#ff7f50"/><rect x="744" y="64" width="1" height="1" fill="#ff7f50"/><path d="M16 621 H67 L74 628.5 L67 636 H16 Z" fill="#000"/><rect x="748" y="621" width="49" height="15" fill="#000"/><path d="M797 620 L806 628.5 L797 637 Z" fill="#ff0000" shape-rendering="geometricPrecision"/><path d="M751 105.5 L756.5 99 H812 V112 H756.5 Z" fill="#1a1a1a"/></svg>
<div class="t" style="left:30px;top:7px;font-size:16.5px;color:#ffa500;">SBER=МБ ЦК</div>
<div class="t" style="left:148px;top:7px;font-size:16.5px;color:#ffa500;">H1</div>
<div class="t" style="left:18px;top:35px;font-size:12px;letter-spacing:0.38px;color:#222;">SBER=МБ ЦК(Сбербанк)</div>
<div class="t" style="left:175px;top:35px;font-size:12px;letter-spacing:0.38px;color:#ff7f50;">Fractal(SBER=МБ ЦК)</div>
<div class="t" style="left:313px;top:35px;font-size:12px;letter-spacing:0.32px;color:#228b22;">My_Fractals.Сигналы</div>
<div class="t" style="left:753px;top:76px;font-size:12px;letter-spacing:0.6px;color:#101010;">198</div>
<div class="t" style="left:753px;top:141px;font-size:12px;letter-spacing:0.6px;color:#101010;">196</div>
<div class="t" style="left:753px;top:205px;font-size:12px;letter-spacing:0.6px;color:#101010;">194</div>
<div class="t" style="left:753px;top:270px;font-size:12px;letter-spacing:0.6px;color:#101010;">192</div>
<div class="t" style="left:753px;top:334px;font-size:12px;letter-spacing:0.6px;color:#101010;">190</div>
<div class="t" style="left:753px;top:399px;font-size:12px;letter-spacing:0.6px;color:#101010;">188</div>
<div class="t" style="left:753px;top:464px;font-size:12px;letter-spacing:0.6px;color:#101010;">186</div>
<div class="t" style="left:753px;top:528px;font-size:12px;letter-spacing:0.6px;color:#101010;">184</div>
<div class="t" style="left:753px;top:593px;font-size:12px;letter-spacing:0.6px;color:#101010;">182</div>
<div class="t" style="left:757px;top:100px;font-size:12px;letter-spacing:0.6px;color:#fff;">197,26</div>
<div class="t" style="left:20px;top:607px;font-size:11px;letter-spacing:0.3px;color:#101010;">17:00</div>
<div class="t" style="left:20px;top:623px;font-size:11px;letter-spacing:0.4px;color:#fff;">15/09/17</div>
<div class="t" style="left:104px;top:607px;font-size:11px;letter-spacing:0.3px;color:#101010;">11:00</div>
<div class="t" style="left:104px;top:623px;font-size:11px;letter-spacing:0.4px;color:#101010;">20/09/17</div>
<div class="t" style="left:176px;top:607px;font-size:11px;letter-spacing:0.3px;color:#101010;">11:00</div>
<div class="t" style="left:176px;top:623px;font-size:11px;letter-spacing:0.4px;color:#101010;">22/09/17</div>
<div class="t" style="left:248px;top:607px;font-size:11px;letter-spacing:0.3px;color:#101010;">11:00</div>
<div class="t" style="left:248px;top:623px;font-size:11px;letter-spacing:0.4px;color:#101010;">26/09/17</div>
<div class="t" style="left:320px;top:607px;font-size:11px;letter-spacing:0.3px;color:#101010;">11:00</div>
<div class="t" style="left:320px;top:623px;font-size:11px;letter-spacing:0.4px;color:#101010;">28/09/17</div>
<div class="t" style="left:392px;top:607px;font-size:11px;letter-spacing:0.3px;color:#101010;">11:00</div>
<div class="t" style="left:392px;top:623px;font-size:11px;letter-spacing:0.4px;color:#101010;">02/10/17</div>
<div class="t" style="left:464px;top:607px;font-size:11px;letter-spacing:0.3px;color:#101010;">11:00</div>
<div class="t" style="left:464px;top:623px;font-size:11px;letter-spacing:0.4px;color:#101010;">04/10/17</div>
<div class="t" style="left:536px;top:607px;font-size:11px;letter-spacing:0.3px;color:#101010;">11:00</div>
<div class="t" style="left:536px;top:623px;font-size:11px;letter-spacing:0.4px;color:#101010;">06/10/17</div>
<div class="t" style="left:608px;top:607px;font-size:11px;letter-spacing:0.3px;color:#101010;">11:00</div>
<div class="t" style="left:608px;top:623px;font-size:11px;letter-spacing:0.4px;color:#101010;">10/10/17</div>
<div class="t" style="left:680px;top:607px;font-size:11px;letter-spacing:0.3px;color:#101010;">11:00</div>
<div class="t" style="left:680px;top:623px;font-size:11px;letter-spacing:0.4px;color:#101010;">12/10/17</div>
<div class="t" style="left:753px;top:607px;font-size:11px;letter-spacing:0.3px;color:#101010;">11:00</div>
<div class="t" style="left:752px;top:623px;font-size:11px;letter-spacing:0.4px;color:#fff;">16/10/17</div>
</div></body></html>
